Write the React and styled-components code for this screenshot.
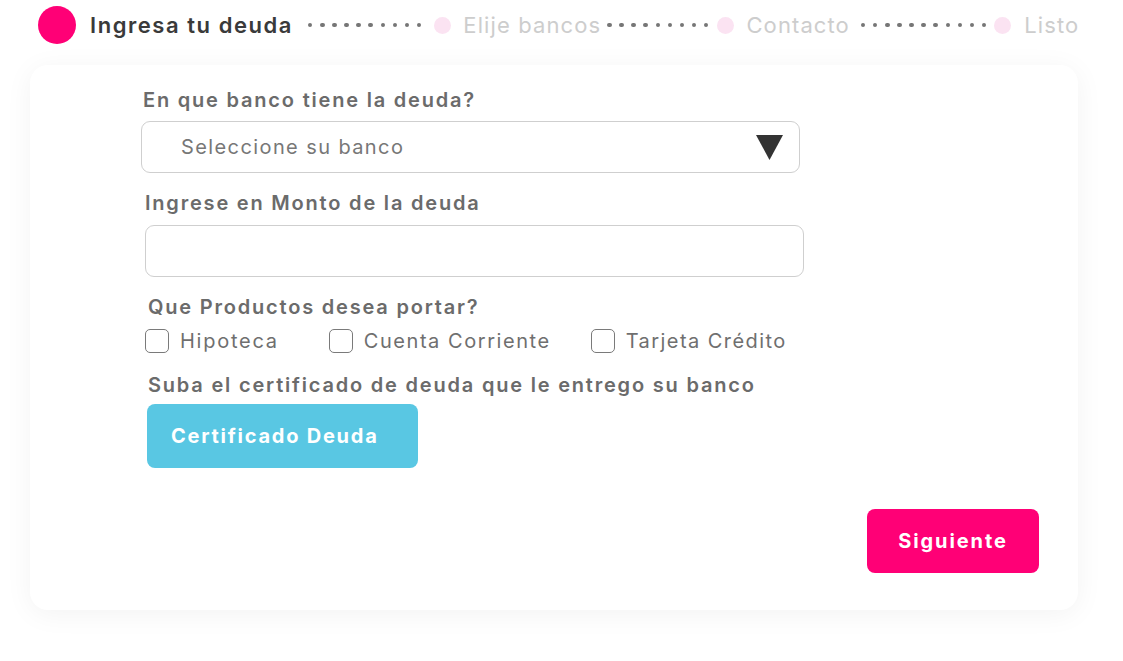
import React from "react";
import styled, { createGlobalStyle } from "styled-components";

const Global = createGlobalStyle`
  html, body { margin: 0; padding: 0; background: #fff; }
  body { font-family: "Inter", "Open Sans", sans-serif; }
  * { box-sizing: border-box; }
`;

const Page = styled.div`
  width: 1123px;
  height: 661px;
  background: #fff;
  overflow: hidden;
`;

const Stepper = styled.div`
  display: flex;
  align-items: center;
  height: 50px;
  padding-left: 38px;
`;

const BigDot = styled.span`
  width: 38px;
  height: 38px;
  border-radius: 50%;
  background: #ff0076;
  flex: none;
`;

const SmallDot = styled.span`
  width: 17px;
  height: 17px;
  border-radius: 50%;
  background: #fbe3f2;
  flex: none;
`;

const StepLabel = styled.span`
  font-size: 22px;
  font-weight: ${(p) => (p.$active ? 600 : 400)};
  color: ${(p) => (p.$active ? "#3a3a3a" : "#cdcdcd")};
  margin-left: ${(p) => p.$ml}px;
  letter-spacing: ${(p) => (p.$active ? "1.55px" : "1.1px")};
  white-space: nowrap;
`;

const Dots = styled.span`
  display: flex;
  gap: 7.6px;
  margin-left: ${(p) => p.$ml}px;
  margin-right: ${(p) => p.$mr}px;
  i {
    width: 4.5px;
    height: 4.5px;
    border-radius: 50%;
    background: #767676;
  }
`;

const Card = styled.div`
  margin: 15px 0 0 30px;
  width: 1048px;
  height: 545px;
  background: #fff;
  border-radius: 18px;
  box-shadow: 0 4px 28px rgba(0, 0, 0, 0.05);
  display: flex;
  flex-direction: column;
  padding: 23px 0 0 111px;
`;

const Label = styled.div`
  font-size: 20px;
  line-height: 24px;
  font-weight: 600;
  color: #6b6b6b;
  letter-spacing: 1.8px;
  margin-left: ${(p) => p.$ml || 0}px;
  margin-top: ${(p) => p.$mt || 0}px;
  white-space: nowrap;
`;

const Field = styled.div`
  width: 659px;
  height: 52px;
  border: 1px solid #cfcfcf;
  border-radius: 9px;
  margin-left: ${(p) => p.$ml || 0}px;
  margin-top: ${(p) => p.$mt || 0}px;
  display: flex;
  align-items: center;
  justify-content: space-between;
  padding: 0 16px 0 39px;
  background: #fff;
`;

const Placeholder = styled.span`
  font-size: 20px;
  color: #777;
  letter-spacing: 1.4px;
`;

const Checks = styled.div`
  display: flex;
  align-items: center;
  margin-top: 10px;
  margin-left: 4px;
  height: 24px;
`;

const CheckItem = styled.label`
  display: flex;
  align-items: center;
  gap: 11px;
  margin-right: ${(p) => p.$mr || 0}px;
  font-size: 20px;
  color: #6f6f6f;
  letter-spacing: ${(p) => p.$ls || 1.75}px;
`;

const Box = styled.span`
  width: 24px;
  height: 24px;
  border: 1.5px solid #7a7a7a;
  border-radius: 5px;
  flex: none;
`;

const Btn = styled.button`
  border: none;
  border-radius: 8px;
  background: ${(p) => p.$bg};
  color: #fff;
  font-family: inherit;
  font-size: 20px;
  font-weight: 700;
  letter-spacing: ${(p) => p.$ls}px;
  height: 64px;
  width: ${(p) => p.$w}px;
  text-align: ${(p) => (p.$left ? "left" : "center")};
  padding: ${(p) => (p.$left ? "0 0 0 24px" : "0")};
  cursor: pointer;
`;

const UploadRow = styled.div`
  margin-top: 7px;
  margin-left: 6px;
`;

const Footer = styled.div`
  display: flex;
  justify-content: flex-end;
  margin-top: 41px;
  padding-right: 39px;
`;

const Triangle = () => (
  <svg width="27" height="25" viewBox="0 0 27 25">
    <polygon points="0,0 27,0 13.5,25" fill="#333" />
  </svg>
);

const DotRow = ({ n, ml, mr }) => (
  <Dots $ml={ml} $mr={mr}>
    {Array.from({ length: n }).map((_, i) => (
      <i key={i} />
    ))}
  </Dots>
);

export default function App() {
  return (
    <Page>
      <Global />
      <Stepper>
        <BigDot />
        <StepLabel $active $ml={14}>Ingresa tu deuda</StepLabel>
        <DotRow n={10} ml={15} mr={13} />
        <SmallDot />
        <StepLabel $ml={12}>Elije bancos</StepLabel>
        <DotRow n={9} ml={6} mr={9} />
        <SmallDot />
        <StepLabel $ml={12}>Contacto</StepLabel>
        <DotRow n={11} ml={11} mr={8} />
        <SmallDot />
        <StepLabel $ml={13}>Listo</StepLabel>
      </Stepper>
      <Card>
        <Label $ml={2}>En que banco tiene la deuda?</Label>
        <Field $mt={9} $ml={0}>
          <Placeholder>Seleccione su banco</Placeholder>
          <Triangle />
        </Field>
        <Label $mt={18} $ml={4}>Ingrese en Monto de la deuda</Label>
        <Field $mt={10} $ml={4} />
        <Label $mt={18} $ml={7}>Que Productos desea portar?</Label>
        <Checks>
          <CheckItem $mr={50}><Box />Hipoteca</CheckItem>
          <CheckItem $mr={40} $ls={1.55}><Box />Cuenta Corriente</CheckItem>
          <CheckItem $ls={1.45}><Box />Tarjeta Crédito</CheckItem>
        </Checks>
        <Label $mt={20} $ml={7}>Suba el certificado de deuda que le entrego su banco</Label>
        <UploadRow>
          <Btn $bg="#59c7e3" $w={271} $ls={1.75} $left>Certificado Deuda</Btn>
        </UploadRow>
        <Footer>
          <Btn $bg="#ff0076" $w={172} $ls={1.9}>Siguiente</Btn>
        </Footer>
      </Card>
    </Page>
  );
}
